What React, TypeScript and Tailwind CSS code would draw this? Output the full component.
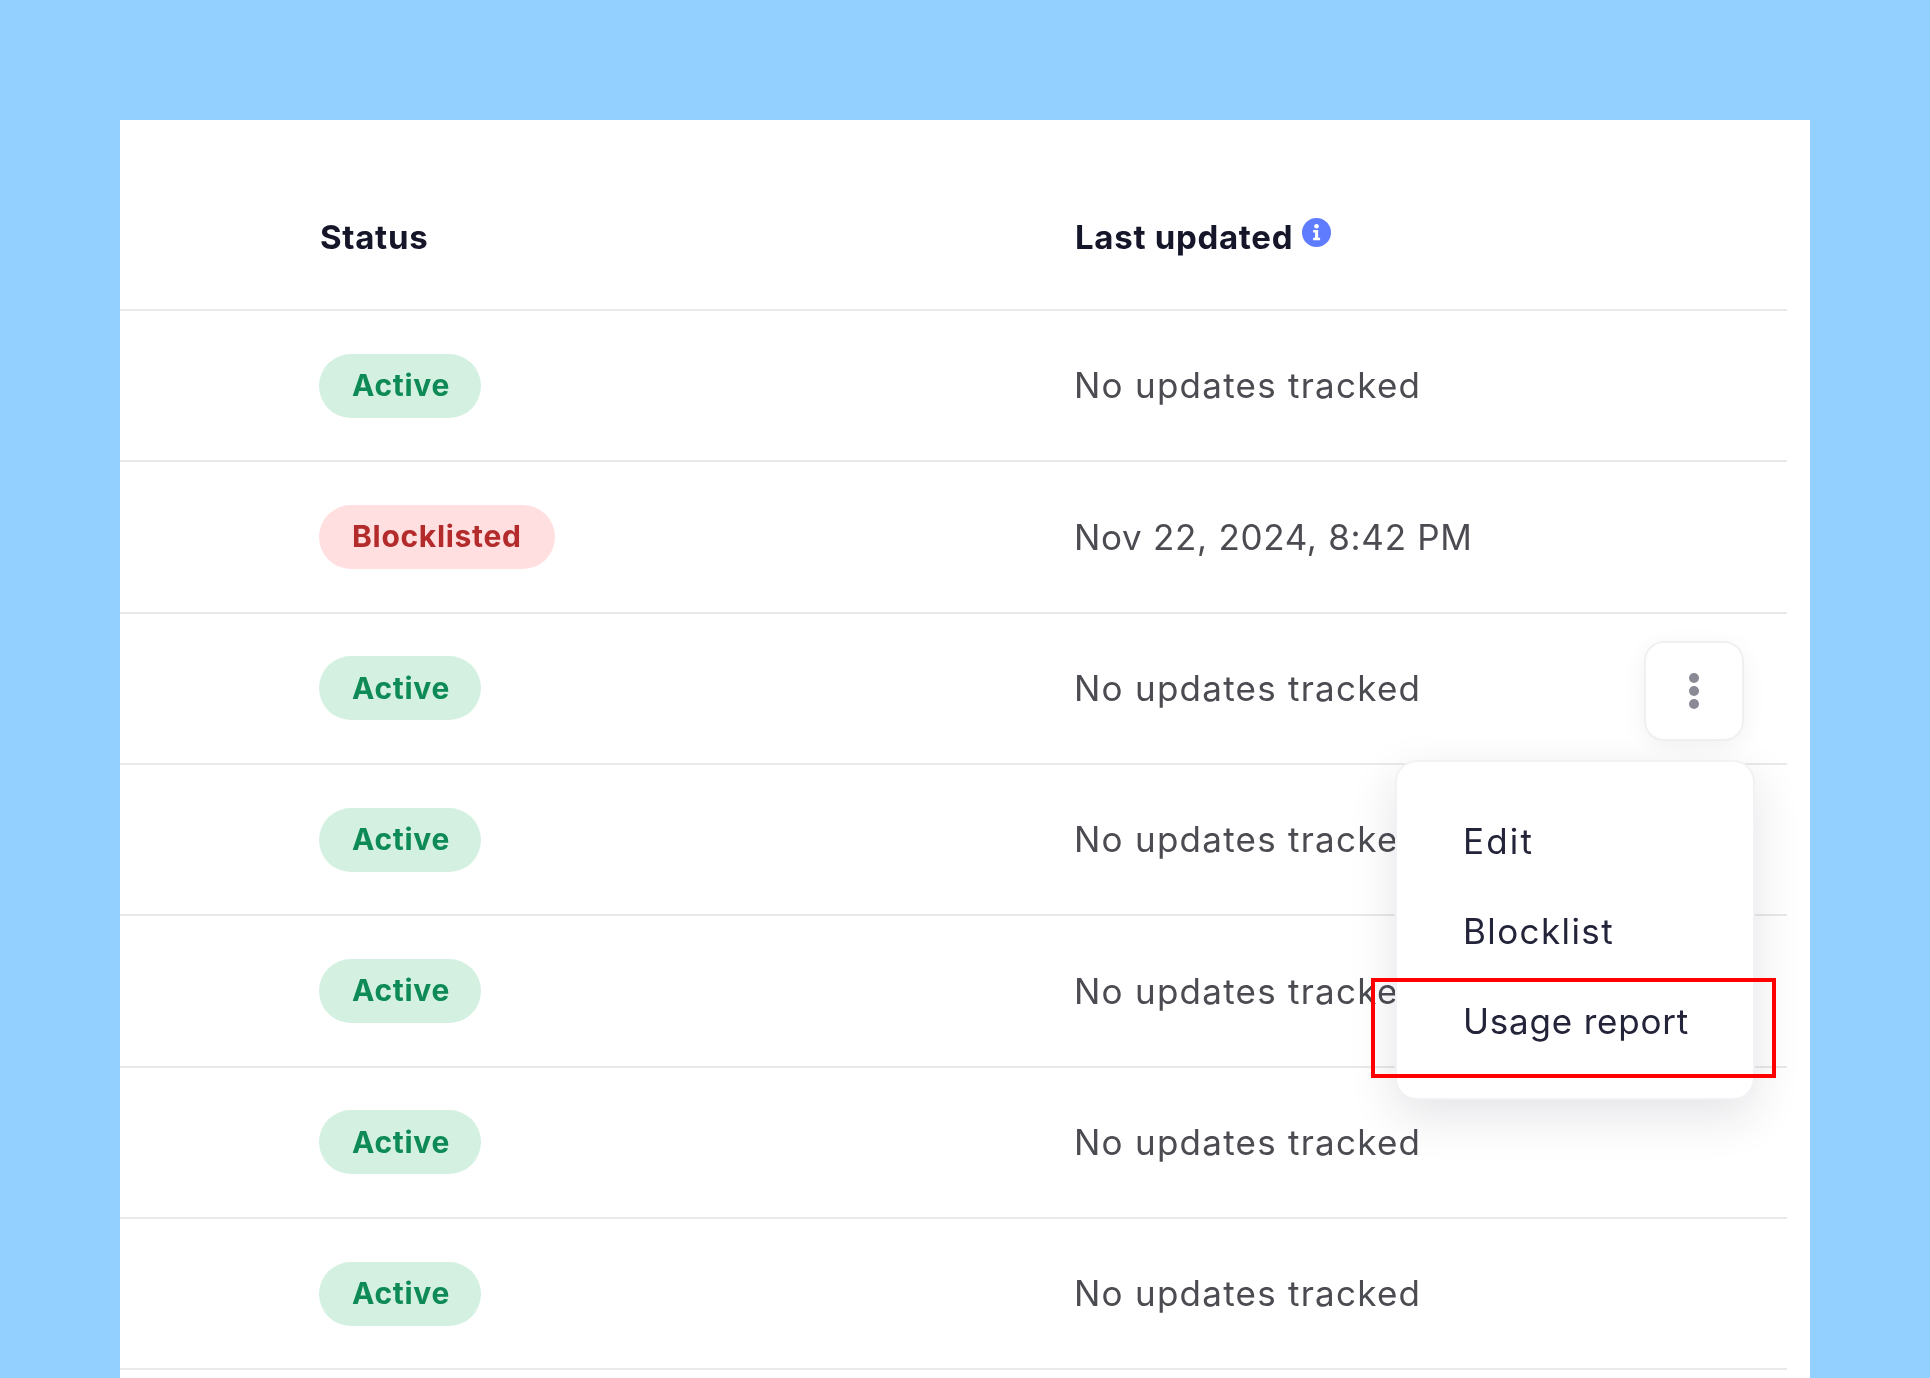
const rows = [
  { status: 'Active', updated: 'No updates tracked' },
  { status: 'Blocklisted', updated: 'Nov 22, 2024, 8:42 PM', date: true },
  { status: 'Active', updated: 'No updates tracked', open: true },
  { status: 'Active', updated: 'No updates tracked' },
  { status: 'Active', updated: 'No updates tracked' },
  { status: 'Active', updated: 'No updates tracked' },
  { status: 'Active', updated: 'No updates tracked' },
]

function InfoIcon() {
  return (
    <svg width="29" height="29" viewBox="0 0 30 30" className="ml-[9px] mt-[-11px]">
      <circle cx="15" cy="15" r="15" fill="#5f7cff" />
      <circle cx="15" cy="8.5" r="2.4" fill="#fff" />
      <path d="M11.5 12.5h5.2v8h2v2.6h-7.2v-2.6h2v-5.4h-2z" fill="#fff" />
    </svg>
  )
}

function Badge({ label }: { label: string }) {
  const blocked = label === 'Blocklisted'
  return (
    <span
      className={
        blocked
          ? 'inline-flex h-[64px] items-center rounded-[32px] bg-[#ffdfe0] px-[33px] text-[30px] font-bold tracking-[0.7px] text-[#b42b2c]'
          : 'inline-flex h-[64px] items-center rounded-[32px] bg-[#d3f0e1] pr-[31px] pl-[33px] text-[30px] font-bold tracking-[0.7px] text-[#0e8a56]'
      }
    >
      {label}
    </span>
  )
}

function RowMenu() {
  return (
    <>
      <button className="mt-[5px] mr-[43px] ml-auto flex h-[100px] w-[100px] flex-col items-center justify-center gap-[3px] rounded-[20px] border-2 border-[#f0f0f2] bg-white shadow-[0_6px_24px_rgba(30,30,60,0.06)]">
        <span className="h-[10px] w-[10px] rounded-full bg-[#8a8a96]" />
        <span className="h-[10px] w-[10px] rounded-full bg-[#8a8a96]" />
        <span className="h-[10px] w-[10px] rounded-full bg-[#8a8a96]" />
      </button>
      <div className="absolute top-[146px] right-[32px] z-10 flex h-[340px] w-[360px] flex-col rounded-[22px] border-2 border-[#f2f2f4] bg-white pt-[35px] pl-[66px] text-[35px] text-[#23233a] shadow-[0_16px_48px_rgba(30,30,60,0.12)]">
        <div className="flex h-[90px] items-center tracking-[2.2px]">Edit</div>
        <div className="flex h-[90px] items-center tracking-[1.4px]">Blocklist</div>
        <div className="flex h-[90px] items-center tracking-[0.8px]">Usage report</div>
      </div>
    </>
  )
}

export default function App() {
  return (
    <div className="h-[1378px] overflow-hidden bg-[#94d0ff] px-[120px] pt-[120px] font-['Inter',sans-serif]">
      <div className="relative h-full bg-white pr-[23px]">
        <div className="blur-[0.6px]">
          <div className="flex h-[191px] items-center border-b-2 border-[#e9e9e9] pt-[47px] pl-[200px] text-[33px] font-bold tracking-[0.7px] text-[#16162b]">
            <div className="w-[755px]">Status</div>
            <div className="flex items-center">
              Last updated
              <InfoIcon />
            </div>
          </div>
          {rows.map((row, i) => (
            <div
              key={i}
              className="relative flex h-[151.33px] items-center border-b-2 border-[#e9e9e9] pl-[199px] text-[35px] text-[#4b4b52]"
            >
              <div className="w-[755px]">
                <Badge label={row.status} />
              </div>
              <div className={row.date ? 'tracking-[0.7px]' : 'tracking-[1.25px]'}>{row.updated}</div>
              {row.open && <RowMenu />}
            </div>
          ))}
        </div>
        <div className="absolute top-[858px] right-[34px] z-20 h-[100px] w-[405px] border-4 border-[#ff0000]" />
      </div>
    </div>
  )
}
